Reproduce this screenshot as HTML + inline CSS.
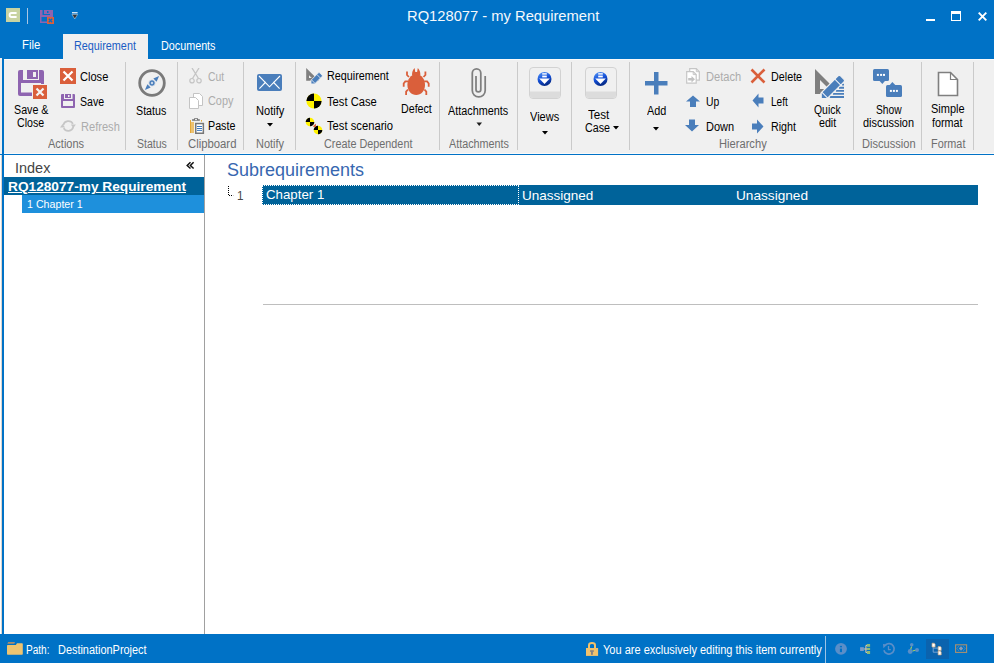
<!DOCTYPE html><html><head><meta charset="utf-8"><title>RQ128077 - my Requirement</title><style>html,body{margin:0;padding:0;width:994px;height:663px;overflow:hidden;background:#fff;position:relative}</style></head><body>
<div style="position:absolute;left:0px;top:0px;width:994px;height:59px;background:#0072C6;"></div>
<svg style="position:absolute;left:6px;top:8px;" width="14" height="14" viewBox="0 0 14 14"><rect width="14" height="14" fill="#C8D3A2"/><path d="M10.6 5 H5.6 Q3.6 5 3.6 7 Q3.6 9 5.6 9 H10.6" fill="none" stroke="#fff" stroke-width="1.9"/></svg>
<div style="position:absolute;left:27px;top:8px;width:1px;height:16px;background:#A9C6E4;"></div>
<svg style="position:absolute;left:40px;top:10px;" width="15" height="15" viewBox="0 0 15 15"><rect x="0" y="0" width="13" height="13" fill="#8E64B0"/><rect x="2.5" y="0" width="7.5" height="5" fill="#0072C6"/><rect x="4" y="0" width="6" height="4" fill="#8E64B0"/><rect x="7" y="1" width="1.5" height="2" fill="#0072C6"/><rect x="1.5" y="7" width="9.5" height="4.5" fill="#0072C6"/><rect x="7" y="7" width="7" height="7" fill="#DA5F3B"/><path d="M8.8 8.8 L12.2 12.2 M12.2 8.8 L8.8 12.2" stroke="#0072C6" stroke-width="1.3"/></svg>
<svg style="position:absolute;left:71px;top:11px;" width="8" height="10" viewBox="0 0 8 10"><rect x="1" y="1.2" width="5.6" height="1.1" fill="#fff"/><path d="M1 3.4 H6.6 L3.8 8 Z" fill="#333" stroke="#DDE6EE" stroke-width="0.5"/></svg>
<div style="position:absolute;left:926px;top:19px;width:9px;height:2px;background:#fff;"></div>
<div style="position:absolute;left:951px;top:11px;width:10px;height:10px;background:transparent;box-sizing:border-box;border:1px solid #fff;border-top-width:3px;"></div>
<svg style="position:absolute;left:977px;top:11px;" width="11" height="11" viewBox="0 0 11 11"><path d="M1.7 1.7 L9.3 9.3 M9.3 1.7 L1.7 9.3" stroke="#fff" stroke-width="1.9"/></svg>
<div style="position:absolute;left:63px;top:34px;width:85px;height:26px;background:#F0F0F0;"></div>
<div style="position:absolute;left:0px;top:58px;width:2px;height:96px;background:#F0F0F0;"></div>
<div style="position:absolute;left:4px;top:59px;width:990px;height:95px;background:#F0F0F0;"></div>
<div style="position:absolute;left:4px;top:59px;width:59px;height:1px;background:#FAFAFA;"></div>
<div style="position:absolute;left:148px;top:59px;width:846px;height:1px;background:#FAFAFA;"></div>
<div style="position:absolute;left:4px;top:153px;width:990px;height:1px;background:#FAFAFA;"></div>
<div style="position:absolute;left:0px;top:154px;width:994px;height:1px;background:#0072C6;"></div>
<div style="position:absolute;left:2px;top:59px;width:2px;height:575px;background:#0072C6;"></div>
<div style="position:absolute;left:125px;top:62px;width:1px;height:88px;background:#CACACA;"></div>
<div style="position:absolute;left:177px;top:62px;width:1px;height:88px;background:#CACACA;"></div>
<div style="position:absolute;left:243px;top:62px;width:1px;height:88px;background:#CACACA;"></div>
<div style="position:absolute;left:295px;top:62px;width:1px;height:88px;background:#CACACA;"></div>
<div style="position:absolute;left:439px;top:62px;width:1px;height:88px;background:#CACACA;"></div>
<div style="position:absolute;left:517px;top:62px;width:1px;height:88px;background:#CACACA;"></div>
<div style="position:absolute;left:571px;top:62px;width:1px;height:88px;background:#CACACA;"></div>
<div style="position:absolute;left:629px;top:62px;width:1px;height:88px;background:#CACACA;"></div>
<div style="position:absolute;left:853px;top:62px;width:1px;height:88px;background:#CACACA;"></div>
<div style="position:absolute;left:921px;top:62px;width:1px;height:88px;background:#CACACA;"></div>
<div style="position:absolute;left:973px;top:62px;width:1px;height:88px;background:#CACACA;"></div>
<svg style="position:absolute;left:18px;top:70px;" width="30" height="30" viewBox="0 0 30 30"><path d="M2 0 H24 Q26 0 26 2 V24 Q26 26 24 26 H2 Q0 26 0 24 V2 Q0 0 2 0 Z" fill="#8E64B0"/>
<rect x="5" y="0" width="16" height="10" fill="#F0F0F0"/><rect x="9" y="0" width="11" height="9" fill="#8E64B0"/><rect x="15" y="2" width="3" height="5" fill="#F0F0F0"/>
<rect x="3" y="13" width="20" height="9.5" fill="#F0F0F0"/>
<rect x="14" y="14" width="16" height="16" fill="#F0F0F0"/><rect x="15" y="15" width="14" height="14" fill="#DA5F3B"/>
<path d="M18.5 18.5 L25.5 25.5 M25.5 18.5 L18.5 25.5" stroke="#F4F4F4" stroke-width="2.2"/></svg>
<svg style="position:absolute;left:60px;top:68px;" width="16" height="16" viewBox="0 0 16 16"><rect width="16" height="16" fill="#DA5F3B"/><path d="M3.5 3.5 L12.5 12.5 M12.5 3.5 L3.5 12.5" stroke="#fff" stroke-width="2.2"/></svg>
<svg style="position:absolute;left:61px;top:94px;" width="15" height="15" viewBox="0 0 15 15"><rect width="14" height="14" rx="1" fill="#8E64B0"/><rect x="3" y="0" width="8.5" height="5" fill="#F0F0F0"/><rect x="4" y="0" width="6" height="4" fill="#8E64B0"/><rect x="7" y="1" width="1.5" height="2" fill="#F0F0F0"/><rect x="2" y="7" width="10" height="5" fill="#F0F0F0"/></svg>
<svg style="position:absolute;left:59px;top:119px;" width="18" height="14" viewBox="0 0 18 14"><path d="M4.3 6 A5.2 5.2 0 0 1 13.9 4.9 M14.3 8 A5.2 5.2 0 0 1 4.7 9.1" fill="none" stroke="#C6C6C6" stroke-width="1.7"/><path d="M11.8 5.6 H16.9 L14.35 8.9 Z M1 8.4 H6.1 L3.55 5.1 Z" fill="#C6C6C6"/></svg>
<svg style="position:absolute;left:137px;top:68px;" width="30" height="30" viewBox="0 0 30 30"><circle cx="15" cy="15" r="12.3" fill="none" stroke="#7A7A7A" stroke-width="2.8"/><path d="M7.9 22.1 L13.66 19.6 L10.4 16.34 Z M22.1 7.9 L19.6 13.66 L16.34 10.4 Z" fill="#4A7EBB"/><circle cx="15" cy="15" r="3.3" fill="#4A7EBB" stroke="#F0F0F0" stroke-width="0.9"/><circle cx="15" cy="15" r="1.2" fill="#C8D6E8"/></svg>
<svg style="position:absolute;left:189px;top:68px;" width="14" height="17" viewBox="0 0 14 17"><path d="M3 0 L9.5 10.5 M10 0 L3.5 10.5" stroke="#C4C4C4" stroke-width="1.3"/><circle cx="3" cy="12.7" r="2.2" fill="none" stroke="#C4C4C4" stroke-width="1.2"/><circle cx="10" cy="12.7" r="2.2" fill="none" stroke="#C4C4C4" stroke-width="1.2"/></svg>
<svg style="position:absolute;left:189px;top:93px;" width="15" height="17" viewBox="0 0 15 17"><path d="M4.5 0.5 H10.5 L13.5 3.5 V12.5 H4.5 Z" fill="#fff" stroke="#C4C4C4"/><path d="M0.5 4.5 H6.5 L9.5 7.5 V15.5 H0.5 Z" fill="#fff" stroke="#C4C4C4"/></svg>
<svg style="position:absolute;left:186px;top:114px;" width="22" height="22" viewBox="0 0 22 22"><rect x="4" y="6" width="1" height="13" fill="#E3A838"/><rect x="5" y="8" width="3" height="11" fill="#EDC170"/><rect x="15" y="6" width="1" height="1.6" fill="#E3A838"/><path d="M8.1 4.2 H12 V5.3 H13.8 V6.8 H6.1 V5.3 H8.1 Z" fill="#707070"/><rect x="9" y="5" width="2" height="1.1" fill="#E8E8E8"/><rect x="9.75" y="9.55" width="7.6" height="9.7" fill="#fff" stroke="#777" stroke-width="1.5"/><path d="M11 12.5 H16 M11 14.5 H16 M11 16.4 H16" stroke="#3C78C0" stroke-width="1"/></svg>
<svg style="position:absolute;left:256px;top:73px;" width="27" height="19" viewBox="0 0 27 19"><rect x="1" y="1" width="25" height="17" rx="2" fill="#4A7EBB"/><path d="M3 3 L13.5 13.8 L24 3 M3.4 15.7 L9.8 9 M23.6 15.7 L17.2 9" fill="none" stroke="#fff" stroke-width="1.1"/></svg>
<svg style="position:absolute;left:267px;top:123px;" width="6" height="4" viewBox="0 0 6 4"><path d="M0 0 H6 L3 3.5 Z" fill="#000"/></svg>
<svg style="position:absolute;left:305px;top:67px;" width="20" height="20" viewBox="0 0 20 20"><path d="M1.2 1 V13.8 H14 Z" fill="#7F7F7F"/><path d="M4 8.2 V11 H6.8 Z" fill="#F0F0F0"/><g transform="translate(6,16.9) rotate(-45)"><path d="M0 0 L2.6 -2.6 H13 Q14 -2.6 14 -1.6 V1.6 Q14 2.6 13 2.6 H2.6 Z" fill="#4A7EBB" stroke="#F0F0F0" stroke-width="0.8"/><path d="M3.2 -2.6 V2.6 M10.8 -2.6 V2.6" stroke="#E8EEF6" stroke-width="0.8"/></g></svg>
<svg style="position:absolute;left:306px;top:93px;" width="16" height="16" viewBox="0 0 16 16"><circle cx="8" cy="8" r="7.6" fill="#FFF200"/><path d="M8 8 V0.4 A7.6 7.6 0 0 0 0.4 8 Z" fill="#000"/><path d="M8 8 V15.6 A7.6 7.6 0 0 0 15.6 8 Z" fill="#000"/></svg>
<svg style="position:absolute;left:305px;top:117px;" width="18" height="18" viewBox="0 0 18 18"><path d="M8 9.6 L10.9 6.7 L10.6 10 Z" fill="#E0603A"/><circle cx="5" cy="5" r="4.3" fill="#FFF200"/><path d="M5 5 V0.7 A4.3 4.3 0 0 0 0.7 5 Z" fill="#000"/><path d="M5 5 V9.3 A4.3 4.3 0 0 0 9.3 5 Z" fill="#000"/><circle cx="13" cy="13" r="4.3" fill="#FFF200"/><path d="M13 13 V8.7 A4.3 4.3 0 0 0 8.7 13 Z" fill="#000"/><path d="M13 13 V17.3 A4.3 4.3 0 0 0 17.3 13 Z" fill="#000"/><path d="M8 9.6 L10.9 6.7 L10.6 10 Z" fill="#E0603A"/></svg>
<svg style="position:absolute;left:402px;top:67px;" width="29" height="29" viewBox="0 0 29 29"><path d="M14.2 7.3 C20 7.3 23 13 23 18 C23 24 19 28 14.2 28 C9.4 28 5.4 24 5.4 18 C5.4 13 8.4 7.3 14.2 7.3 Z" fill="#DA5F3B"/><path d="M10 8.5 Q9.8 3.5 12.6 1 L13.3 4.9 H15.1 L15.8 1 Q18.6 3.5 18.4 8.5 Z" fill="#DA5F3B"/>
<path d="M6.9 10 L5 8 V4.5 M21.5 10 L23.4 8 V4.5 M6.3 14.4 H3.3 L1.7 16.5 V19.8 M22.1 14.4 H25.1 L26.7 16.5 V19.8 M6 22.5 L4.1 24.7 V28 M22.4 22.5 L24.3 24.7 V28" fill="none" stroke="#DA5F3B" stroke-width="1.8"/></svg>
<svg style="position:absolute;left:466px;top:64px;" width="26" height="38" viewBox="0 0 26 38"><path d="M10 12 V25.4 A2.4 2.4 0 0 0 14.8 25.4 V9.1 A4.25 4.25 0 0 0 6.3 9.1 V26.5 A6.45 6.45 0 0 0 19.2 26.5 V12" fill="none" stroke="#7F7F7F" stroke-width="1.75"/></svg>
<svg style="position:absolute;left:476px;top:122px;" width="7" height="5" viewBox="0 0 7 5"><path d="M0.5 0.5 H6 L3.25 4 Z" fill="#1E1E1E"/></svg>
<svg style="position:absolute;left:529px;top:67px;" width="33" height="33" viewBox="0 0 33 33"><defs><linearGradient id="g529" x1="0" y1="0" x2="0.4" y2="1"><stop offset="0" stop-color="#5A9BF8"/><stop offset="0.55" stop-color="#1450D8"/><stop offset="1" stop-color="#062C8A"/></linearGradient></defs>
<rect x="0.5" y="0.5" width="31" height="31" rx="3.5" fill="#F0F0F0" stroke="#D2D2D2"/><path d="M1 24.5 H31 V28 Q31 31 28 31 H4 Q1 31 1 28 Z" fill="#DCDCDC"/>
<circle cx="15.5" cy="12" r="7" fill="url(#g529)"/><rect x="13.2" y="6.2" width="4.6" height="1.4" fill="#fff"/><rect x="13.2" y="8.6" width="4.6" height="1.8" fill="#fff"/><path d="M10.2 11.6 H20.8 L15.5 17 Z" fill="#fff"/></svg>
<svg style="position:absolute;left:542px;top:131px;" width="6" height="4" viewBox="0 0 6 4"><path d="M0 0 H6 L3 3.5 Z" fill="#000"/></svg>
<svg style="position:absolute;left:585px;top:67px;" width="33" height="33" viewBox="0 0 33 33"><defs><linearGradient id="g585" x1="0" y1="0" x2="0.4" y2="1"><stop offset="0" stop-color="#5A9BF8"/><stop offset="0.55" stop-color="#1450D8"/><stop offset="1" stop-color="#062C8A"/></linearGradient></defs>
<rect x="0.5" y="0.5" width="31" height="31" rx="3.5" fill="#F0F0F0" stroke="#D2D2D2"/><path d="M1 24.5 H31 V28 Q31 31 28 31 H4 Q1 31 1 28 Z" fill="#DCDCDC"/>
<circle cx="15.5" cy="12" r="7" fill="url(#g585)"/><rect x="13.2" y="6.2" width="4.6" height="1.4" fill="#fff"/><rect x="13.2" y="8.6" width="4.6" height="1.8" fill="#fff"/><path d="M10.2 11.6 H20.8 L15.5 17 Z" fill="#fff"/></svg>
<svg style="position:absolute;left:613px;top:126px;" width="6" height="4" viewBox="0 0 6 4"><path d="M0 0 H6 L3 3.5 Z" fill="#000"/></svg>
<svg style="position:absolute;left:645px;top:72px;" width="23" height="23" viewBox="0 0 23 23"><rect x="0" y="9" width="22.5" height="4.5" fill="#4A7EBB"/><rect x="9" y="0" width="4.5" height="22.5" fill="#4A7EBB"/></svg>
<svg style="position:absolute;left:653px;top:127px;" width="6" height="4" viewBox="0 0 6 4"><path d="M0 0 H6 L3 3.5 Z" fill="#000"/></svg>
<svg style="position:absolute;left:685px;top:67px;" width="16" height="18" viewBox="0 0 16 18"><path d="M4.7 1.7 H11.3 L14.3 4.7 V13.2 H4.7 Z" fill="#fff" stroke="#C6C6C6" stroke-width="1.2"/><path d="M11.3 1.7 V4.7 H14.3" fill="none" stroke="#C6C6C6" stroke-width="1"/><path d="M1.7 4.6 H8.2 L11.2 7.6 V16.2 H1.7 Z" fill="#fff" stroke="#C6C6C6" stroke-width="1.2"/><path d="M8.2 4.6 V7.6 H11.2" fill="none" stroke="#C6C6C6" stroke-width="1"/><path d="M3.2 11.1 H6.5 V9 L10 12.2 L6.5 15.5 V13.6 H3.2 Z" fill="#C2C2C2"/></svg>
<svg style="position:absolute;left:686px;top:95px;" width="15" height="13" viewBox="0 0 15 13"><path d="M7 0.5 L14 6.5 H10 V12 H4 V6.5 H0 Z" fill="#4A7EBB"/></svg>
<svg style="position:absolute;left:685px;top:119px;" width="15" height="13" viewBox="0 0 15 13"><path d="M7 12.5 L14 6 H10 V0.5 H4 V6 H0 Z" fill="#4A7EBB"/></svg>
<svg style="position:absolute;left:750px;top:68px;" width="16" height="16" viewBox="0 0 16 16"><path d="M1.5 1.5 L14.5 14.5 M14.5 1.5 L1.5 14.5" stroke="#DA5F3B" stroke-width="2.6"/></svg>
<svg style="position:absolute;left:752px;top:93px;" width="12" height="15" viewBox="0 0 12 15"><path d="M0.5 7.5 L6.5 0.5 V4.5 H11.5 V10.5 H6.5 V14.5 Z" fill="#4A7EBB"/></svg>
<svg style="position:absolute;left:752px;top:119px;" width="12" height="15" viewBox="0 0 12 15"><path d="M11.5 7.5 L5 0.5 V4.5 H0 V10.5 H5 V14.5 Z" fill="#4A7EBB"/></svg>
<svg style="position:absolute;left:814px;top:68px;" width="32" height="32" viewBox="0 0 32 32"><path d="M1 1 V26 H5.96 L15.98 15.98 Z" fill="#7F7F7F"/><path d="M6 12 V21 H15 Z" fill="#F0F0F0"/>
<path d="M28 16.6 H30 M25 19.8 H30 M21.9 22.9 H30 M18.9 25.9 H30 M15.8 29 H30" stroke="#4A7EBB" stroke-width="1.9"/>
<g transform="translate(7.2,30.7) rotate(-45)"><path d="M0 0 L4.2 -4.2 H28 Q29.8 -4.2 29.8 -2.4 V2.4 Q29.8 4.2 28 4.2 H4.2 Z" fill="#4A7EBB" stroke="#F0F0F0" stroke-width="1.2"/><path d="M5 -4.2 V4.2 M23.5 -4.2 V4.2" stroke="#F0F4FA" stroke-width="1"/></g></svg>
<svg style="position:absolute;left:872px;top:68px;" width="32" height="31" viewBox="0 0 32 31"><rect x="1" y="1" width="16" height="12" rx="1.5" fill="#4A7EBB"/><path d="M7.2 12.5 L10.3 15.9 L13.4 12.5 Z" fill="#4A7EBB"/>
<rect x="4.9" y="5.9" width="2" height="2" fill="#fff"/><rect x="8.1" y="5.9" width="2" height="2" fill="#fff"/><rect x="11" y="5.9" width="2" height="2" fill="#fff"/>
<rect x="14" y="17" width="16" height="12" rx="1.5" fill="#4A7EBB"/><path d="M17.3 17.5 L20.4 13.9 L23.7 17.5 Z" fill="#4A7EBB"/>
<rect x="17.9" y="21.9" width="2" height="2" fill="#fff"/><rect x="20.9" y="21.9" width="2" height="2" fill="#fff"/><rect x="23.9" y="21.9" width="2" height="2" fill="#fff"/></svg>
<svg style="position:absolute;left:937px;top:71px;" width="22" height="26" viewBox="0 0 22 26"><path d="M1.5 1.5 H13.5 L20.5 8.5 V24.5 H1.5 Z" fill="#fff" stroke="#7F7F7F" stroke-width="1.6"/><path d="M13.5 1.5 V8.5 H20.5" fill="none" stroke="#7F7F7F" stroke-width="1.2"/></svg>
<div style="position:absolute;left:204px;top:155px;width:1px;height:479px;background:#A0A0A0;"></div>
<div style="position:absolute;left:1px;top:155px;width:1px;height:479px;background:#DDD6CE;"></div>
<svg style="position:absolute;left:186px;top:161px;" width="10" height="10" viewBox="0 0 10 10"><path d="M4.5 1.3 L1.2 4.5 L4.5 7.5 M7.6 1.3 L4.4 4.5 L7.6 7.5" fill="none" stroke="#111" stroke-width="1.5"/></svg>
<div style="position:absolute;left:4px;top:177px;width:200px;height:18px;background:#00639A;"></div>
<div style="position:absolute;left:22px;top:195px;width:182px;height:18px;background:#1E90DC;"></div>
<svg style="position:absolute;left:227px;top:185px;" width="8" height="12" viewBox="0 0 8 12"><path d="M1.5 1 V10.5 H6.2" fill="none" stroke="#000" stroke-width="1" stroke-dasharray="1 1"/></svg>
<div style="position:absolute;left:262px;top:185px;width:716px;height:20px;background:#00639A;"></div>
<div style="position:absolute;left:262px;top:185px;width:257px;height:20px;background:transparent;box-sizing:border-box;border:1px dotted #FFFFFF;"></div>
<div style="position:absolute;left:263px;top:304px;width:715px;height:1px;background:#BEBEBE;"></div>
<div style="position:absolute;left:0px;top:634px;width:994px;height:29px;background:#0072C6;"></div>
<svg style="position:absolute;left:7px;top:641px;" width="17" height="15" viewBox="0 0 17 15"><path d="M0.3 2.7 L1.2 1.1 H8 L7.3 2.7 Z" fill="#A88E6E"/><path d="M0.8 4 H8.9 L10 2.2 H15 Q15.8 2.2 15.8 3 V13 Q15.8 13.8 15 13.8 H0.8 Q0 13.8 0 13 V4.8 Q0 4 0.8 4 Z" fill="#EEC471"/></svg>
<svg style="position:absolute;left:585px;top:641px;" width="15" height="16" viewBox="0 0 15 16"><path d="M4 7.5 V4.2 Q4 2 7 2 Q10 2 10 4.2 V7.5" fill="none" stroke="#F2C26C" stroke-width="2"/><rect x="1" y="7" width="12.1" height="7.9" fill="#F2C26C"/><rect x="5.1" y="9.3" width="3.7" height="1.5" fill="#7A7A84"/><rect x="6.1" y="10.6" width="1.7" height="3.2" fill="#7A7A84"/></svg>
<div style="position:absolute;left:825px;top:636px;width:1px;height:27px;background:#9CC3E6;"></div>
<svg style="position:absolute;left:826px;top:636px;" width="168" height="27" viewBox="0 0 168 27"><circle cx="15" cy="12.8" r="5.9" fill="#5A8EC8"/><rect x="13.9" y="9.9" width="2.1" height="1.4" fill="#0072C6"/><rect x="13.9" y="12.6" width="2.1" height="3.5" fill="#0072C6"/>
<rect x="34.1" y="11.2" width="3.7" height="3.8" fill="#7C9CC8"/><path d="M37.8 13 H41 M39.9 9.4 V16.5 M39.9 9.4 H41 M39.9 16.5 H41" fill="none" stroke="#DCC4A4" stroke-width="1.1"/><rect x="41" y="8" width="3.1" height="2.8" fill="#8DBA78"/><rect x="41" y="11.9" width="3.1" height="2.1" fill="#8DBA78"/><rect x="41" y="15" width="3.1" height="3" fill="#8DBA78"/>
<path d="M59.4 9 A5.2 5.2 0 1 1 57.9 14.2" fill="none" stroke="#5A8EC8" stroke-width="1.7"/><path d="M57 8 L61.2 8.4 L57.4 12.2 Z" fill="#5A8EC8"/><path d="M62.5 10 V13.6 H64.8" fill="none" stroke="#5A8EC8" stroke-width="1.3"/>
<circle cx="85.7" cy="8.7" r="1.8" fill="#5A8EC8"/><circle cx="84.2" cy="15.5" r="2.4" fill="#5A8EC8"/><circle cx="91" cy="14" r="2" fill="#5A8EC8"/><path d="M85.6 10.6 L84.7 13.2 M86.6 15 L89.2 14.2" stroke="#A8D060" stroke-width="1.1"/>
<rect x="100" y="3" width="23" height="20" fill="#0B63AE"/>
<path d="M107.2 11 V16.2 H112 M107.2 12.1 H112" fill="none" stroke="#7FAAD8" stroke-width="0.9"/><path d="M106 7.2 H108.3 L109.1 8.2 V11 H106 Z M112.1 10.6 H114.4 L115.2 11.6 V14.4 H112.1 Z M112.1 15.1 H114.4 L115.2 16.1 V18.9 H112.1 Z" fill="#FFFFFF" stroke="#C8A47C" stroke-width="0.7"/>
<rect x="129.6" y="8.8" width="11" height="7.6" fill="none" stroke="#A89070" stroke-width="1.1"/><path d="M135 10.3 L137.2 12.5 L135 14.7 L132.8 12.5 Z" fill="#8C9CB4"/><path d="M132.5 10.5 L130.9 12.5 L132.5 14.5 M137.5 10.5 L139.1 12.5 L137.5 14.5" fill="none" stroke="#9AA4B0" stroke-width="0.8" stroke-dasharray="0.9 0.6"/></svg>
<div style="position:absolute;left:407.05px;top:7.80px;font-family:'Liberation Sans', sans-serif;font-size:15.5px;line-height:15.5px;color:#F4F8FC;font-weight:400;white-space:nowrap;transform:scaleX(0.9498);transform-origin:0 0;">RQ128077 - my Requirement</div>
<div style="position:absolute;left:21.60px;top:38.54px;font-family:'Liberation Sans', sans-serif;font-size:12px;line-height:12px;color:#FFFFFF;font-weight:400;white-space:nowrap;transform:scaleX(0.9460);transform-origin:0 0;">File</div>
<div style="position:absolute;left:73.50px;top:39.74px;font-family:'Liberation Sans', sans-serif;font-size:12px;line-height:12px;color:#1A5CC4;font-weight:400;white-space:nowrap;transform:scaleX(0.9010);transform-origin:0 0;">Requirement</div>
<div style="position:absolute;left:160.50px;top:39.74px;font-family:'Liberation Sans', sans-serif;font-size:12px;line-height:12px;color:#FFFFFF;font-weight:400;white-space:nowrap;transform:scaleX(0.8980);transform-origin:0 0;">Documents</div>
<div style="position:absolute;left:48.10px;top:137.74px;font-family:'Liberation Sans', sans-serif;font-size:12px;line-height:12px;color:#6E6E6E;font-weight:400;white-space:nowrap;transform:scaleX(0.9174);transform-origin:0 0;">Actions</div>
<div style="position:absolute;left:137.20px;top:137.74px;font-family:'Liberation Sans', sans-serif;font-size:12px;line-height:12px;color:#6E6E6E;font-weight:400;white-space:nowrap;transform:scaleX(0.8760);transform-origin:0 0;">Status</div>
<div style="position:absolute;left:188.00px;top:137.74px;font-family:'Liberation Sans', sans-serif;font-size:12px;line-height:12px;color:#6E6E6E;font-weight:400;white-space:nowrap;transform:scaleX(0.9430);transform-origin:0 0;">Clipboard</div>
<div style="position:absolute;left:256.30px;top:137.74px;font-family:'Liberation Sans', sans-serif;font-size:12px;line-height:12px;color:#6E6E6E;font-weight:400;white-space:nowrap;transform:scaleX(0.9128);transform-origin:0 0;">Notify</div>
<div style="position:absolute;left:324.00px;top:137.74px;font-family:'Liberation Sans', sans-serif;font-size:12px;line-height:12px;color:#6E6E6E;font-weight:400;white-space:nowrap;transform:scaleX(0.9014);transform-origin:0 0;">Create Dependent</div>
<div style="position:absolute;left:449.00px;top:137.74px;font-family:'Liberation Sans', sans-serif;font-size:12px;line-height:12px;color:#6E6E6E;font-weight:400;white-space:nowrap;transform:scaleX(0.8996);transform-origin:0 0;">Attachments</div>
<div style="position:absolute;left:719.00px;top:137.74px;font-family:'Liberation Sans', sans-serif;font-size:12px;line-height:12px;color:#6E6E6E;font-weight:400;white-space:nowrap;transform:scaleX(0.9290);transform-origin:0 0;">Hierarchy</div>
<div style="position:absolute;left:862.00px;top:137.74px;font-family:'Liberation Sans', sans-serif;font-size:12px;line-height:12px;color:#6E6E6E;font-weight:400;white-space:nowrap;transform:scaleX(0.9242);transform-origin:0 0;">Discussion</div>
<div style="position:absolute;left:931.00px;top:137.74px;font-family:'Liberation Sans', sans-serif;font-size:12px;line-height:12px;color:#6E6E6E;font-weight:400;white-space:nowrap;transform:scaleX(0.9051);transform-origin:0 0;">Format</div>
<div style="position:absolute;left:14.10px;top:103.64px;font-family:'Liberation Sans', sans-serif;font-size:12px;line-height:12px;color:#000000;font-weight:400;white-space:nowrap;transform:scaleX(0.8918);transform-origin:0 0;">Save &amp;</div>
<div style="position:absolute;left:17.40px;top:117.14px;font-family:'Liberation Sans', sans-serif;font-size:12px;line-height:12px;color:#000000;font-weight:400;white-space:nowrap;transform:scaleX(0.8837);transform-origin:0 0;">Close</div>
<div style="position:absolute;left:80.40px;top:71.34px;font-family:'Liberation Sans', sans-serif;font-size:12px;line-height:12px;color:#000000;font-weight:400;white-space:nowrap;transform:scaleX(0.9224);transform-origin:0 0;">Close</div>
<div style="position:absolute;left:80.40px;top:96.14px;font-family:'Liberation Sans', sans-serif;font-size:12px;line-height:12px;color:#000000;font-weight:400;white-space:nowrap;transform:scaleX(0.8816);transform-origin:0 0;">Save</div>
<div style="position:absolute;left:80.50px;top:121.14px;font-family:'Liberation Sans', sans-serif;font-size:12px;line-height:12px;color:#ACACAC;font-weight:400;white-space:nowrap;transform:scaleX(0.9240);transform-origin:0 0;">Refresh</div>
<div style="position:absolute;left:136.00px;top:104.64px;font-family:'Liberation Sans', sans-serif;font-size:12px;line-height:12px;color:#000000;font-weight:400;white-space:nowrap;transform:scaleX(0.8907);transform-origin:0 0;">Status</div>
<div style="position:absolute;left:208.30px;top:70.84px;font-family:'Liberation Sans', sans-serif;font-size:12px;line-height:12px;color:#ACACAC;font-weight:400;white-space:nowrap;transform:scaleX(0.8635);transform-origin:0 0;">Cut</div>
<div style="position:absolute;left:208.30px;top:95.14px;font-family:'Liberation Sans', sans-serif;font-size:12px;line-height:12px;color:#ACACAC;font-weight:400;white-space:nowrap;transform:scaleX(0.9067);transform-origin:0 0;">Copy</div>
<div style="position:absolute;left:208.30px;top:120.14px;font-family:'Liberation Sans', sans-serif;font-size:12px;line-height:12px;color:#000000;font-weight:400;white-space:nowrap;transform:scaleX(0.8932);transform-origin:0 0;">Paste</div>
<div style="position:absolute;left:256.30px;top:104.64px;font-family:'Liberation Sans', sans-serif;font-size:12px;line-height:12px;color:#000000;font-weight:400;white-space:nowrap;transform:scaleX(0.9226);transform-origin:0 0;">Notify</div>
<div style="position:absolute;left:326.60px;top:70.14px;font-family:'Liberation Sans', sans-serif;font-size:12px;line-height:12px;color:#000000;font-weight:400;white-space:nowrap;transform:scaleX(0.8996);transform-origin:0 0;">Requirement</div>
<div style="position:absolute;left:326.60px;top:95.54px;font-family:'Liberation Sans', sans-serif;font-size:12px;line-height:12px;color:#000000;font-weight:400;white-space:nowrap;transform:scaleX(0.9333);transform-origin:0 0;">Test Case</div>
<div style="position:absolute;left:326.60px;top:120.34px;font-family:'Liberation Sans', sans-serif;font-size:12px;line-height:12px;color:#000000;font-weight:400;white-space:nowrap;transform:scaleX(0.9349);transform-origin:0 0;">Test scenario</div>
<div style="position:absolute;left:400.60px;top:102.84px;font-family:'Liberation Sans', sans-serif;font-size:12px;line-height:12px;color:#000000;font-weight:400;white-space:nowrap;transform:scaleX(0.8883);transform-origin:0 0;">Defect</div>
<div style="position:absolute;left:447.90px;top:104.94px;font-family:'Liberation Sans', sans-serif;font-size:12px;line-height:12px;color:#000000;font-weight:400;white-space:nowrap;transform:scaleX(0.9011);transform-origin:0 0;">Attachments</div>
<div style="position:absolute;left:529.80px;top:110.54px;font-family:'Liberation Sans', sans-serif;font-size:12px;line-height:12px;color:#000000;font-weight:400;white-space:nowrap;transform:scaleX(0.9184);transform-origin:0 0;">Views</div>
<div style="position:absolute;left:588.00px;top:108.64px;font-family:'Liberation Sans', sans-serif;font-size:12px;line-height:12px;color:#000000;font-weight:400;white-space:nowrap;transform:scaleX(0.9703);transform-origin:0 0;">Test</div>
<div style="position:absolute;left:584.50px;top:121.54px;font-family:'Liberation Sans', sans-serif;font-size:12px;line-height:12px;color:#000000;font-weight:400;white-space:nowrap;transform:scaleX(0.8927);transform-origin:0 0;">Case</div>
<div style="position:absolute;left:647.30px;top:104.64px;font-family:'Liberation Sans', sans-serif;font-size:12px;line-height:12px;color:#000000;font-weight:400;white-space:nowrap;transform:scaleX(0.9044);transform-origin:0 0;">Add</div>
<div style="position:absolute;left:705.50px;top:70.54px;font-family:'Liberation Sans', sans-serif;font-size:12px;line-height:12px;color:#ACACAC;font-weight:400;white-space:nowrap;transform:scaleX(0.9238);transform-origin:0 0;">Detach</div>
<div style="position:absolute;left:705.50px;top:95.74px;font-family:'Liberation Sans', sans-serif;font-size:12px;line-height:12px;color:#000000;font-weight:400;white-space:nowrap;transform:scaleX(0.8617);transform-origin:0 0;">Up</div>
<div style="position:absolute;left:705.50px;top:120.64px;font-family:'Liberation Sans', sans-serif;font-size:12px;line-height:12px;color:#000000;font-weight:400;white-space:nowrap;transform:scaleX(0.9165);transform-origin:0 0;">Down</div>
<div style="position:absolute;left:770.50px;top:70.54px;font-family:'Liberation Sans', sans-serif;font-size:12px;line-height:12px;color:#000000;font-weight:400;white-space:nowrap;transform:scaleX(0.8968);transform-origin:0 0;">Delete</div>
<div style="position:absolute;left:770.50px;top:95.74px;font-family:'Liberation Sans', sans-serif;font-size:12px;line-height:12px;color:#000000;font-weight:400;white-space:nowrap;transform:scaleX(0.8413);transform-origin:0 0;">Left</div>
<div style="position:absolute;left:770.50px;top:120.64px;font-family:'Liberation Sans', sans-serif;font-size:12px;line-height:12px;color:#000000;font-weight:400;white-space:nowrap;transform:scaleX(0.8926);transform-origin:0 0;">Right</div>
<div style="position:absolute;left:814.20px;top:103.74px;font-family:'Liberation Sans', sans-serif;font-size:12px;line-height:12px;color:#000000;font-weight:400;white-space:nowrap;transform:scaleX(0.8682);transform-origin:0 0;">Quick</div>
<div style="position:absolute;left:819.00px;top:116.94px;font-family:'Liberation Sans', sans-serif;font-size:12px;line-height:12px;color:#000000;font-weight:400;white-space:nowrap;transform:scaleX(0.8894);transform-origin:0 0;">edit</div>
<div style="position:absolute;left:875.50px;top:103.74px;font-family:'Liberation Sans', sans-serif;font-size:12px;line-height:12px;color:#000000;font-weight:400;white-space:nowrap;transform:scaleX(0.8533);transform-origin:0 0;">Show</div>
<div style="position:absolute;left:862.50px;top:116.94px;font-family:'Liberation Sans', sans-serif;font-size:12px;line-height:12px;color:#000000;font-weight:400;white-space:nowrap;transform:scaleX(0.9105);transform-origin:0 0;">discussion</div>
<div style="position:absolute;left:931.10px;top:103.34px;font-family:'Liberation Sans', sans-serif;font-size:12px;line-height:12px;color:#000000;font-weight:400;white-space:nowrap;transform:scaleX(0.9161);transform-origin:0 0;">Simple</div>
<div style="position:absolute;left:931.90px;top:116.94px;font-family:'Liberation Sans', sans-serif;font-size:12px;line-height:12px;color:#000000;font-weight:400;white-space:nowrap;transform:scaleX(0.8998);transform-origin:0 0;">format</div>
<div style="position:absolute;left:15.07px;top:159.80px;font-family:'Liberation Sans', sans-serif;font-size:15.5px;line-height:15.5px;color:#444444;font-weight:400;white-space:nowrap;transform:scaleX(0.9336);transform-origin:0 0;">Index</div>
<div style="position:absolute;left:8.00px;top:180.84px;font-family:'Liberation Sans', sans-serif;font-size:12px;line-height:12px;color:#FFFFFF;font-weight:700;white-space:nowrap;text-decoration:underline;transform:scaleX(1.1405);transform-origin:0 0;">RQ128077-my Requirement</div>
<div style="position:absolute;left:26.80px;top:198.89px;font-family:'Liberation Sans', sans-serif;font-size:11px;line-height:11px;color:#FFFFFF;font-weight:400;white-space:nowrap;transform:scaleX(0.9693);transform-origin:0 0;">1 Chapter 1</div>
<div style="position:absolute;left:226.60px;top:161.11px;font-family:'Liberation Sans', sans-serif;font-size:18px;line-height:18px;color:#3767B0;font-weight:400;white-space:nowrap;transform:scaleX(0.9987);transform-origin:0 0;">Subrequirements</div>
<div style="position:absolute;left:236.70px;top:188.99px;font-family:'Liberation Sans', sans-serif;font-size:13px;line-height:13px;color:#4A4A4A;font-weight:400;white-space:nowrap;transform:scaleX(0.9000);transform-origin:0 0;">1</div>
<div style="position:absolute;left:266.30px;top:187.99px;font-family:'Liberation Sans', sans-serif;font-size:13px;line-height:13px;color:#FFFFFF;font-weight:400;white-space:nowrap;transform:scaleX(1.0218);transform-origin:0 0;">Chapter 1</div>
<div style="position:absolute;left:522.46px;top:188.59px;font-family:'Liberation Sans', sans-serif;font-size:13px;line-height:13px;color:#FFFFFF;font-weight:400;white-space:nowrap;transform:scaleX(1.0397);transform-origin:0 0;">Unassigned</div>
<div style="position:absolute;left:735.95px;top:188.59px;font-family:'Liberation Sans', sans-serif;font-size:13px;line-height:13px;color:#FFFFFF;font-weight:400;white-space:nowrap;transform:scaleX(1.0486);transform-origin:0 0;">Unassigned</div>
<div style="position:absolute;left:25.80px;top:644.24px;font-family:'Liberation Sans', sans-serif;font-size:12px;line-height:12px;color:#FFFFFF;font-weight:400;white-space:nowrap;transform:scaleX(0.8380);transform-origin:0 0;">Path:</div>
<div style="position:absolute;left:57.60px;top:644.24px;font-family:'Liberation Sans', sans-serif;font-size:12px;line-height:12px;color:#FFFFFF;font-weight:400;white-space:nowrap;transform:scaleX(0.9098);transform-origin:0 0;">DestinationProject</div>
<div style="position:absolute;left:602.60px;top:644.24px;font-family:'Liberation Sans', sans-serif;font-size:12px;line-height:12px;color:#FFFFFF;font-weight:400;white-space:nowrap;transform:scaleX(0.9180);transform-origin:0 0;">You are exclusively editing this item currently</div>
</body></html>
